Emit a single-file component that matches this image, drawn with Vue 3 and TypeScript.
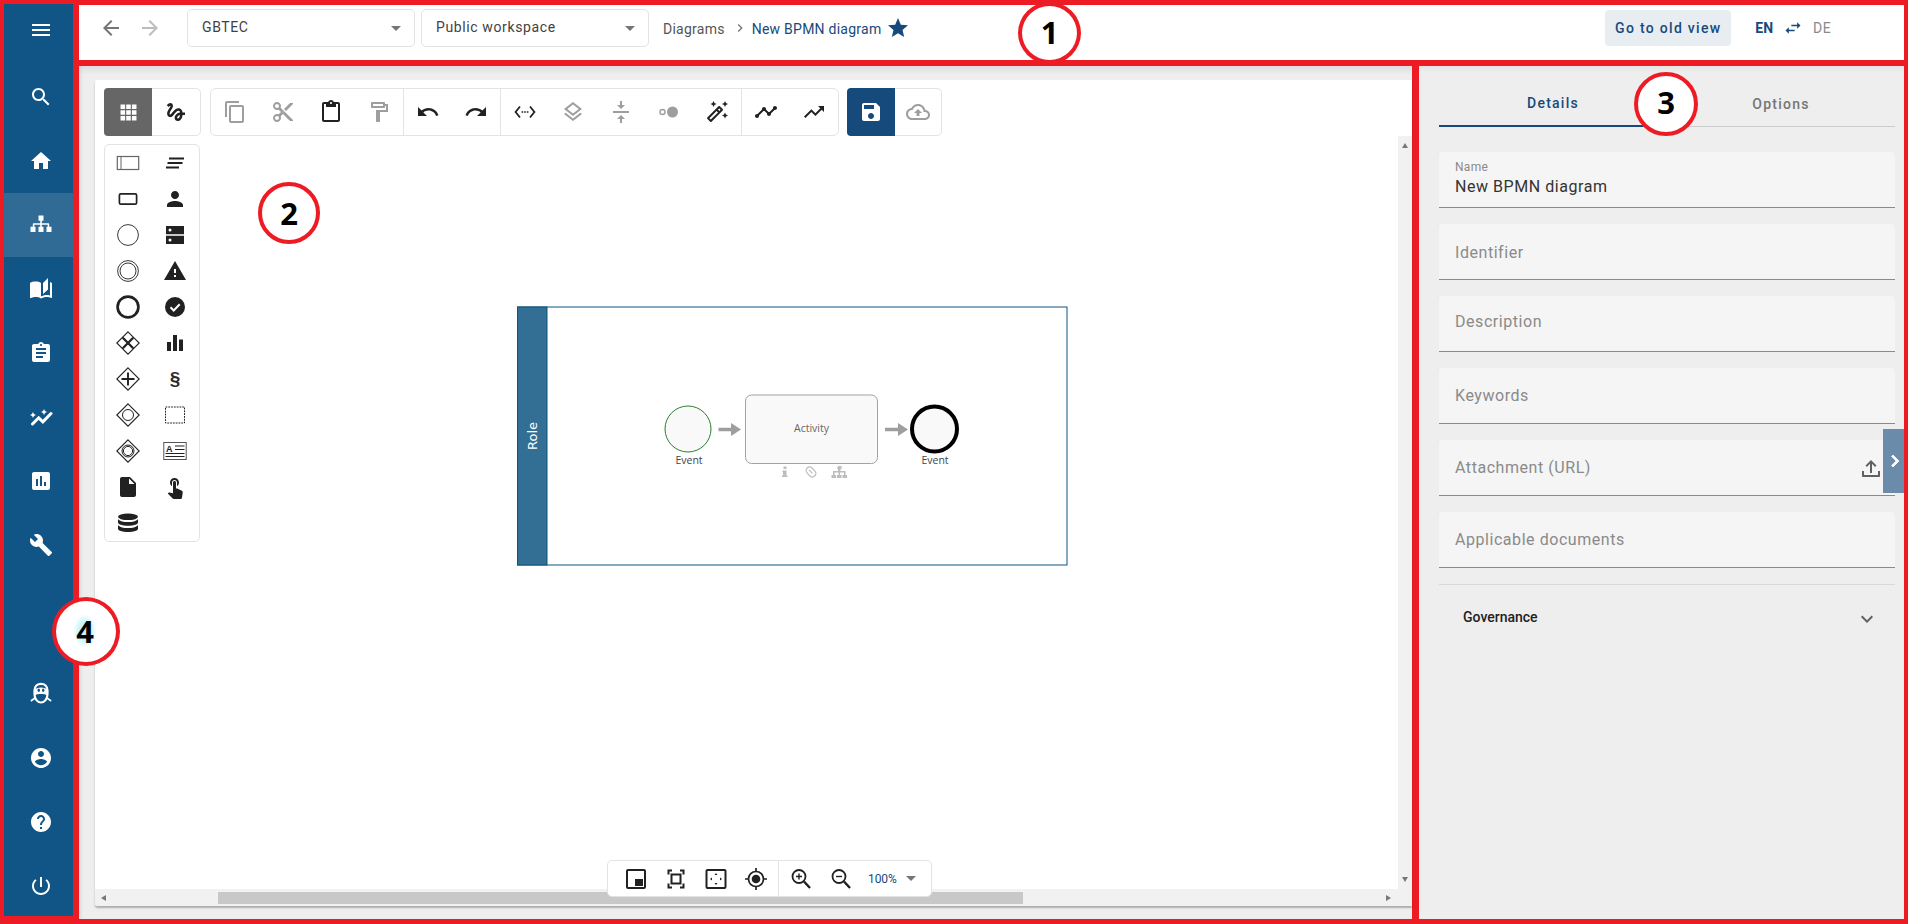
<script setup lang="ts">
const P: Record<string, string> = {
  menu: 'M3 18h18v-2H3v2zm0-5h18v-2H3v2zm0-7v2h18V6H3z',
  search: 'M15.5 14h-.79l-.28-.27C15.41 12.59 16 11.11 16 9.5 16 5.91 13.09 3 9.5 3S3 5.91 3 9.5 5.91 16 9.5 16c1.61 0 3.09-.59 4.23-1.57l.27.28v.79l5 4.99L20.49 19l-4.99-5zm-6 0C7.01 14 5 11.99 5 9.5S7.01 5 9.5 5 14 7.01 14 9.5 11.99 14 9.5 14z',
  home: 'M10 20v-6h4v6h5v-8h3L12 3 2 12h3v8z',
  sitemap: 'M9.5 2.5h5v5.2h-1.7v2.6h6.4c.6 0 1 .4 1 1v2.4h2.3v5.3h-5v-5.3h1.2v-1.9h-5.9v1.9h1.7v5.3h-5v-5.3h1.7v-1.9H5.3v1.9h1.2v5.3h-5v-5.3h2.3v-2.4c0-.6.4-1 1-1h6.4V7.7H9.5z',
  book: 'M19 1l-5 5v11l5-4.5V1zM1 6v14.65c0 .25.25.5.5.5.1 0 .15-.05.25-.05C3.1 20.45 5.05 20 6.5 20c1.95 0 4.05.4 5.5 1.5V6c-1.45-1.1-3.55-1.5-5.5-1.5S2.45 4.9 1 6zm22 13.5V6c-.6-.45-1.25-.75-2-1v13.5c-1.1-.35-2.3-.5-3.5-.5-1.7 0-4.15.65-5.5 1.5v2c1.35-.85 3.8-1.5 5.5-1.5 1.65 0 3.35.3 4.75 1.05.1.05.15.05.25.05.25 0 .5-.25.5-.5v-1.1z',
  assign: 'M19 3h-4.18C14.4 1.84 13.3 1 12 1c-1.3 0-2.4.84-2.82 2H5c-1.1 0-2 .9-2 2v14c0 1.1.9 2 2 2h14c1.1 0 2-.9 2-2V5c0-1.1-.9-2-2-2zm-7 0c.55 0 1 .45 1 1s-.45 1-1 1-1-.45-1-1 .45-1 1-1zm2 14H7v-2h7v2zm3-4H7v-2h10v2zm0-4H7V7h10v2z',
  assess: 'M19 3H5c-1.1 0-2 .9-2 2v14c0 1.1.9 2 2 2h14c1.1 0 2-.9 2-2V5c0-1.1-.9-2-2-2zM9 17H7v-7h2v7zm4 0h-2V7h2v10zm4 0h-2v-4h2v4z',
  build: 'M22.7 19l-9.1-9.1c.9-2.3.4-5-1.5-6.9-2-2-5-2.4-7.4-1.3L9 6 6 9 1.6 4.7C.4 7.1.9 10.1 2.9 12.1c1.9 1.9 4.6 2.4 6.9 1.5l9.1 9.1c.4.4 1 .4 1.4 0l2.3-2.3c.5-.4.5-1.1.1-1.4z',
  account: 'M12 2C6.48 2 2 6.48 2 12s4.48 10 10 10 10-4.48 10-10S17.52 2 12 2zm0 3c1.66 0 3 1.34 3 3s-1.34 3-3 3-3-1.34-3-3 1.34-3 3-3zm0 14.2c-2.5 0-4.71-1.28-6-3.22.03-1.99 4-3.08 6-3.08 1.99 0 5.97 1.09 6 3.08-1.29 1.94-3.5 3.22-6 3.22z',
  help: 'M12 2C6.48 2 2 6.48 2 12s4.48 10 10 10 10-4.48 10-10S17.52 2 12 2zm1 17h-2v-2h2v2zm2.07-7.75l-.9.92C13.45 12.9 13 13.5 13 15h-2v-.5c0-1.1.45-2.1 1.17-2.83l1.24-1.26c.37-.36.59-.86.59-1.41 0-1.1-.9-2-2-2s-2 .9-2 2H8c0-2.21 1.79-4 4-4s4 1.79 4 4c0 .88-.36 1.68-.93 2.25z',
  power: 'M13 3h-2v10h2V3zm4.83 2.17l-1.42 1.42C17.99 7.86 19 9.81 19 12c0 3.87-3.13 7-7 7s-7-3.13-7-7c0-2.19 1.01-4.14 2.58-5.42L6.17 5.17C4.23 6.82 3 9.26 3 12c0 4.97 4.03 9 9 9s9-4.03 9-9c0-2.74-1.23-5.18-3.17-6.83z',
  back: 'M20 11H7.83l5.59-5.59L12 4l-8 8 8 8 1.41-1.41L7.83 13H20v-2z',
  forward: 'M12 4l-1.41 1.41L16.17 11H4v2h12.17l-5.58 5.59L12 20l8-8z',
  star: 'M12 17.27L18.18 21l-1.64-7.03L22 9.24l-7.19-.61L12 2 9.19 8.63 2 9.24l5.46 4.73L5.82 21z',
  swap: 'M6.99 11L3 15l3.99 4v-3H14v-2H6.99v-3zM21 9l-3.99-4v3H10v2h7.01v3L21 9z',
  apps: 'M4.5 4.5h4.3v4.3H4.5zm5.35 0h4.3v4.3h-4.3zm5.35 0h4.3v4.3h-4.3zM4.5 9.85h4.3v4.3H4.5zm5.35 0h4.3v4.3h-4.3zm5.35 0h4.3v4.3h-4.3zM4.5 15.2h4.3v4.3H4.5zm5.35 0h4.3v4.3h-4.3zm5.35 0h4.3v4.3h-4.3z',
  gesture: 'M4.59 6.89c.7-.71 1.4-1.35 1.71-1.22.5.2 0 1.03-.3 1.52-.25.42-2.86 3.89-2.86 6.31 0 1.28.48 2.34 1.34 2.98.75.56 1.74.73 2.64.46 1.07-.31 1.95-1.4 3.06-2.77 1.21-1.49 2.83-3.44 4.08-3.44 1.63 0 1.65 1.01 1.76 1.79-3.78.64-5.38 3.67-5.38 5.37 0 1.7 1.44 3.09 3.21 3.09 1.63 0 4.29-1.33 4.69-6.1H21v-2.5h-2.47c-.15-1.65-1.09-4.2-4.03-4.2-2.25 0-4.18 1.91-4.94 2.84-.58.73-2.06 2.48-2.29 2.72-.25.3-.68.84-1.11.84-.45 0-.72-.83-.36-1.92.35-1.09 1.4-2.86 1.85-3.52.78-1.14 1.3-1.92 1.3-3.28C8.95 3.69 7.31 3 6.44 3 5.12 3 3.97 4 3.72 4.25c-.36.36-.66.66-.88.93l1.75 1.71zm9.29 11.66c-.31 0-.74-.26-.74-.72 0-.6.73-2.2 2.87-2.76-.3 2.69-1.43 3.48-2.13 3.48z',
  copy: 'M16 1H4c-1.1 0-2 .9-2 2v14h2V3h12V1zm3 4H8c-1.1 0-2 .9-2 2v14c0 1.1.9 2 2 2h11c1.1 0 2-.9 2-2V7c0-1.1-.9-2-2-2zm0 16H8V7h11v14z',
  cut: 'M9.64 7.64c.23-.5.36-1.05.36-1.64 0-2.21-1.79-4-4-4S2 3.79 2 6s1.79 4 4 4c.59 0 1.14-.13 1.64-.36L10 12l-2.36 2.36C7.14 14.13 6.59 14 6 14c-2.21 0-4 1.79-4 4s1.79 4 4 4 4-1.79 4-4c0-.59-.13-1.14-.36-1.64L12 14l7 7h3v-1L9.64 7.64zM6 8c-1.1 0-2-.89-2-2s.9-2 2-2 2 .89 2 2-.9 2-2 2zm0 12c-1.1 0-2-.89-2-2s.9-2 2-2 2 .89 2 2-.9 2-2 2zm6-7.5c-.28 0-.5-.22-.5-.5s.22-.5.5-.5.5.22.5.5-.22.5-.5.5zM19 3l-6 6 2 2 7-7V3z',
  paste: 'M19 2h-4.18C14.4.84 13.3 0 12 0c-1.3 0-2.4.84-2.82 2H5c-1.1 0-2 .9-2 2v16c0 1.1.9 2 2 2h14c1.1 0 2-.9 2-2V4c0-1.1-.9-2-2-2zm-7 0c.55 0 1 .45 1 1s-.45 1-1 1-1-.45-1-1 .45-1 1-1zm7 18H5V4h2v3h10V4h2v16z',
  paint: 'M18 4V3c0-.55-.45-1-1-1H5c-.55 0-1 .45-1 1v4c0 .55.45 1 1 1h12c.55 0 1-.45 1-1V6h1v4H9v11c0 .55.45 1 1 1h2c.55 0 1-.45 1-1v-9h8V4h-3zm-2 2H6V4h10v2z',
  undo: 'M12.5 8c-2.65 0-5.05.99-6.9 2.6L2 7v9h9l-3.62-3.62c1.39-1.16 3.16-1.88 5.12-1.88 3.54 0 6.55 2.31 7.6 5.5l2.37-.78C21.08 11.03 17.15 8 12.5 8z',
  redo: 'M18.4 10.6C16.55 8.99 14.15 8 11.5 8c-4.65 0-8.58 3.03-9.96 7.22L3.9 16c1.05-3.19 4.05-5.5 7.6-5.5 1.95 0 3.73.72 5.12 1.88L13 16h9V7l-3.6 3.6z',
  layers: 'M11.99 18.54l-7.37-5.73L3 14.07l9 7 9-7-1.63-1.27-7.38 5.74zM12 16l7.36-5.73L21 9l-9-7-9 7 1.63 1.27L12 16zm0-11.47L17.74 9 12 13.47 6.26 9 12 4.53z',
  valign: 'M8 19h3v4h2v-4h3l-4-4-4 4zm8-14h-3V1h-2v4H8l4 4 4-4zM4 11v2h16v-2H4z',
  wand: 'M20 7l.94-2.06L23 4l-2.06-.94L20 1l-.94 2.06L17 4l2.06.94zM8.5 7l.94-2.06L11.5 4l-2.06-.94L8.5 1l-.94 2.06L5.5 4l2.06.94zM20 12.5l-.94 2.06-2.06.94 2.06.94.94 2.06.94-2.06L23 15.5l-2.06-.94zm-2.29-3.38l-2.83-2.83c-.2-.19-.45-.29-.71-.29-.26 0-.51.1-.71.29L2.29 17.46c-.39.39-.39 1.02 0 1.41l2.83 2.83c.2.2.45.3.71.3s.51-.1.71-.29l11.17-11.17c.39-.39.39-1.03 0-1.42zm-3.54-.7l1.41 1.41L14.41 11 13 9.59l1.17-1.17zM5.83 19.59l-1.41-1.41L11.59 11 13 12.41l-7.17 7.18z',
  timeline: 'M23 8c0 1.1-.9 2-2 2-.18 0-.35-.02-.51-.07l-3.56 3.55c.05.16.07.34.07.52 0 1.1-.9 2-2 2s-2-.9-2-2c0-.18.02-.36.07-.52l-2.55-2.55c-.16.05-.34.07-.52.07s-.36-.02-.52-.07l-4.55 4.56c.05.16.07.33.07.51 0 1.1-.9 2-2 2s-2-.9-2-2 .9-2 2-2c.18 0 .35.02.51.07l4.56-4.55C8.02 9.36 8 9.18 8 9c0-1.1.9-2 2-2s2 .9 2 2c0 .18-.02.36-.07.52l2.55 2.55c.16-.05.34-.07.52-.07s.36.02.52.07l3.55-3.56C19.02 8.35 19 8.18 19 8c0-1.1.9-2 2-2s2 .9 2 2z',
  trend: 'M16 6l2.29 2.29-4.88 4.88-4-4L2 16.59 3.41 18l6-6 4 4 6.3-6.29L22 12V6z',
  save: 'M17 3H5c-1.11 0-2 .9-2 2v14c0 1.1.89 2 2 2h14c1.1 0 2-.9 2-2V7l-4-4zm-5 16c-1.66 0-3-1.34-3-3s1.34-3 3-3 3 1.34 3 3-1.34 3-3 3zm3-10H5V5h10v4z',
  cloud: 'M19.35 10.04C18.67 6.59 15.64 4 12 4 9.11 4 6.6 5.64 5.35 8.04 2.34 8.36 0 10.91 0 14c0 3.31 2.69 6 6 6h13c2.76 0 5-2.24 5-5 0-2.64-2.05-4.78-4.65-4.96zM19 18H6c-2.21 0-4-1.79-4-4 0-2.05 1.53-3.76 3.56-3.97l1.07-.11.5-.95C8.08 7.14 9.94 6 12 6c2.62 0 4.88 1.86 5.39 4.43l.3 1.5 1.53.11c1.56.1 2.78 1.41 2.78 2.96 0 1.65-1.35 3-3 3zM8 13h2.55v3h2.9v-3H16l-4-4z',
  person: 'M12 12c2.21 0 4-1.79 4-4s-1.79-4-4-4-4 1.79-4 4 1.79 4 4 4zm0 2c-2.67 0-8 1.34-8 4v2h16v-2c0-2.66-5.33-4-8-4z',
  warning: 'M1 21h22L12 2 1 21zm12-3h-2v-2h2v2zm0-4h-2v-4h2v4z',
  bars: 'M4 11h4v9H4zM10 4h4v16h-4zM16 8.5h4V20h-4z',
  file: 'M6 2c-1.1 0-1.99.9-1.99 2L4 20c0 1.1.89 2 1.99 2H18c1.1 0 2-.9 2-2V8l-6-6H6zm7 7V3.5L18.5 9H13z',
  touch: 'M9 11.24V7.5C9 6.12 10.12 5 11.5 5S14 6.12 14 7.5v3.74c1.21-.81 2-2.18 2-3.74C16 5.01 13.99 3 11.5 3S7 5.01 7 7.5c0 1.56.79 2.93 2 3.74zm9.84 4.63l-4.54-2.26c-.17-.07-.35-.11-.54-.11H13v-6c0-.83-.67-1.5-1.5-1.5S10 6.67 10 7.5v10.74l-3.43-.72c-.08-.01-.15-.03-.24-.03-.31 0-.59.13-.79.33l-.79.8 4.94 4.94c.27.27.65.44 1.06.44h6.79c.75 0 1.33-.55 1.44-1.28l.75-5.27c.01-.07.02-.14.02-.2 0-.62-.38-1.16-.91-1.38z',
  chevR: 'M10 6L8.59 7.41 13.17 12l-4.58 4.59L10 18l6-6z',
  chevD: 'M7.41 8.59L12 13.17l4.59-4.58L18 10l-6 6-6-6z'
}

function svgOf(d: string): string {
  return `<path fill="currentColor" d="${d}"/>`
}
const ring = 'fill="none" stroke="currentColor"'
const diamond = `<path d="M12 .8L23.2 12 12 23.2.8 12z" ${ring} stroke-width="1.1"/>`
const I: Record<string, string> = {
  graph: `<path fill="currentColor" d="M14.060 7.940L12 7l2.060-.94L15 4l.94 2.060L18 7l-2.060.94L15 10zM4 13l.94-2.060L7 10l-2.060-.94L4 7l-.94 2.060L1 10l2.060.94z"/><path d="M3.500 19l6.200-6.200 4.200 4L22 8.500" ${ring} stroke-width="3" stroke-linecap="round"/>`,
  code: `<path d="M7 6.500L2.600 12 7 17.500M17 6.500L21.400 12 17 17.500" ${ring} stroke-width="1.800"/><path fill="currentColor" d="M8.600 11.200h1.600v1.600H8.600zm2.600 0h1.600v1.600h-1.600zm2.600 0h1.600v1.600h-1.600z"/>`,
  robot: `<path d="M5.500 8.500C5.500 4 8.500 1.800 12 1.800s6.500 2.200 6.500 6.700v3.500c0 5-3 8.500-6.500 8.500s-6.500-3.500-6.500-8.500z" ${ring} stroke-width="2.200"/><path d="M5.500 13c3.500-1.500 9.500-1.500 13 0V8c-1.500-3.500-11.500-3.500-13 0z" fill="currentColor"/><ellipse cx="9.800" cy="8.300" rx="1.200" ry="1.700" fill="#105585"/><ellipse cx="14.200" cy="8.300" rx="1.200" ry="1.700" fill="#105585"/><path d="M6 16l-4.200 3M18 16l4.200 3" ${ring} stroke-width="1.600"/>`,
  pool: `<rect x="1.300" y="5.500" width="21.400" height="13" ${ring} stroke-width="1.200" style="color:#666"/><path d="M5 5.500v13" ${ring} stroke-width="1" style="color:#666"/>`,
  notes: `<path d="M6 7.500h15M4.500 12h15M3 16.500h13" ${ring} stroke-width="1.800"/>`,
  task: `<rect x="3.400" y="6.800" width="17.200" height="10.400" rx="1.500" ${ring} stroke-width="1.700"/>`,
  start: `<circle cx="12" cy="12" r="10.400" ${ring} stroke-width=".9"/>`,
  inter: `<circle cx="12" cy="12" r="10.400" ${ring} stroke-width=".9"/><circle cx="12" cy="12" r="8" ${ring} stroke-width=".9"/>`,
  end: `<circle cx="12" cy="12" r="10.400" ${ring} stroke-width="2.700"/>`,
  store: `<path fill="currentColor" fill-rule="evenodd" d="M3 3h18v8.300H3zM3 12.700h18V21H3zM5.500 7.100a1.500 1.500 0 1 0 3 0 1.500 1.500 0 0 0-3 0zM5.500 16.900a1.500 1.500 0 1 0 3 0 1.500 1.500 0 0 0-3 0z"/>`,
  check: `<circle cx="12" cy="12" r="10" fill="currentColor"/><path d="M7.500 12.300l3.200 3.200 6-6.300" fill="none" stroke="#fff" stroke-width="2"/>`,
  gwX: `${diamond}<path d="M6.800 6.800l10.400 10.400M17.200 6.800L6.800 17.200" ${ring} stroke-width="2.300"/>`,
  gwP: `${diamond}<path d="M12 5.500v13M5.500 12h13" ${ring} stroke-width="1.900"/>`,
  gwO: `${diamond}<circle cx="12" cy="12" r="5.500" ${ring} stroke-width="1"/>`,
  gwD: `${diamond}<circle cx="12" cy="12" r="6" ${ring} stroke-width="1"/><circle cx="12" cy="12" r="4.600" ${ring} stroke-width="1"/>`,
  dash: `<rect x="2.500" y="4" width="19" height="16" ${ring} stroke-width="1" stroke-dasharray="1.800 1"/>`,
  doc: `<rect x=".8" y="3.500" width="22.400" height="17" ${ring} stroke-width="1" style="color:#555"/><path d="M2.500 14.500h19M2.500 17.500h19M12 7h9.500M12 10.500h9.500" ${ring} stroke-width="1.100"/><text x="3" y="12.500" font-family="Liberation Sans, sans-serif" font-weight="700" font-size="9" fill="currentColor">A</text>`,
  db: `<ellipse cx="12" cy="5.800" rx="10" ry="3.300" fill="currentColor"/><path fill="currentColor" d="M2 8.200c2 2 5.500 2.900 10 2.900s8-.9 10-2.900v3.200c0 1.900-4.500 3.300-10 3.300s-10-1.400-10-3.300zM2 14.200c2 2 5.500 2.900 10 2.900s8-.9 10-2.900v3.600c0 1.900-4.500 3.300-10 3.300s-10-1.400-10-3.300z"/>`,
  pip: `<rect x="3" y="3" width="18" height="18" rx="1" ${ring} stroke-width="2"/><rect x="11" y="12" width="8" height="7" fill="currentColor"/>`,
  focus: `<path d="M8 3.500H4.500v4M16 3.500h3.500v4M8 20.500H4.500v-4M16 20.500h3.500v-4" ${ring} stroke-width="2"/><rect x="7.500" y="7.500" width="9" height="9" ${ring} stroke-width="2"/>`,
  fit: `<rect x="2.500" y="3" width="19" height="18" rx="1" ${ring} stroke-width="2"/><path fill="currentColor" d="M12 6l1.500 2h-3zM12 18l-1.500-2h3zM6 12l2-1.500v3zM18 12l-2 1.500v-3z"/>`,
  target: `<circle cx="12" cy="12" r="7.500" ${ring} stroke-width="1.700"/><circle cx="12" cy="12" r="4.300" fill="currentColor"/><path d="M12 1v3.500M12 19.500V23M1 12h3.500M19.500 12H23" ${ring} stroke-width="1.700"/>`,
  zoomIn: `<circle cx="10" cy="9.500" r="6.500" ${ring} stroke-width="1.800"/><path d="M15 14.500l6 6.500" ${ring} stroke-width="2.400"/><path d="M10 6.500v6M7 9.500h6" ${ring} stroke-width="1.400"/>`,
  zoomOut: `<circle cx="10" cy="9.500" r="6.500" ${ring} stroke-width="1.800"/><path d="M15 14.500l6 6.500" ${ring} stroke-width="2.400"/><path d="M7 9.500h6" ${ring} stroke-width="1.400"/>`,
  dots: `<circle cx="5.500" cy="12" r="2.500" fill="none" stroke="currentColor" stroke-width="1.400"/><circle cx="15.500" cy="12" r="5.500" fill="currentColor"/>`
}
for (const k of Object.keys(P)) I[k] = svgOf(P[k])

const navTop = ['search', 'home', 'sitemap', 'book', 'assign', 'graph', 'assess', 'build']
const navBottom = ['robot', 'account', 'help', 'power']

interface Tool { i: string; off?: boolean }
const toolGroups: Tool[][] = [
  [{ i: 'copy', off: true }, { i: 'cut', off: true }, { i: 'paste' }, { i: 'paint', off: true }],
  [{ i: 'undo' }, { i: 'redo' }],
  [{ i: 'code' }, { i: 'layers', off: true }, { i: 'valign', off: true }, { i: 'dots', off: true }, { i: 'wand' }],
  [{ i: 'timeline' }, { i: 'trend' }]
]
const palette = ['pool', 'notes', 'task', 'person', 'start', 'store', 'inter', 'warning', 'end', 'check', 'gwX', 'bars', 'gwP', '§', 'gwO', 'dash', 'gwD', 'doc', 'file', 'touch', 'db']
const fields = ['Identifier', 'Description', 'Keywords', 'Attachment (URL)', 'Applicable documents']
</script>

<template>
  <div class="page">
    <aside class="nav">
      <div class="nav-item nav-burger"><svg class="i24" viewBox="0 0 24 24" v-html="I.menu" /></div>
      <div v-for="n in navTop" :key="n" class="nav-item" :class="{ active: n === 'sitemap' }">
        <svg class="i24" viewBox="0 0 24 24" v-html="I[n]" />
      </div>
      <div class="nav-spacer" />
      <div v-for="n in navBottom" :key="n" class="nav-item">
        <svg class="i24" viewBox="0 0 24 24" v-html="I[n]" />
      </div>
    </aside>

    <div class="right">
      <header class="top">
        <svg class="i24 arrow" viewBox="0 0 24 24" v-html="I.back" />
        <svg class="i24 arrow off" viewBox="0 0 24 24" v-html="I.forward" />
        <div class="select first"><span>GBTEC</span><i class="caret" /></div>
        <div class="select"><span>Public workspace</span><i class="caret" /></div>
        <nav class="crumbs">
          <span class="crumb">Diagrams</span>
          <svg class="crumb-sep" viewBox="0 0 24 24" v-html="I.chevR" />
          <span class="crumb current">New BPMN diagram</span>
          <svg class="star" viewBox="0 0 24 24" v-html="I.star" />
        </nav>
        <div class="top-right">
          <button class="old">Go to old view</button>
          <div class="lang">
            <b>EN</b>
            <svg class="swap" viewBox="0 0 24 24" v-html="I.swap" />
            <span>DE</span>
          </div>
        </div>
      </header>

      <div class="body">
        <main class="main">
          <section class="card">
            <svg class="diagram" viewBox="95 80 1317 826" width="1317" height="826">
              <rect x="517.500" y="307" width="549.500" height="258" fill="#fff" stroke="#0f5480" stroke-width="1" />
              <rect x="517.500" y="307" width="29.500" height="258" fill="#336f94" stroke="#0f5480" stroke-width="1" />
              <text transform="translate(537 436) rotate(-90)" text-anchor="middle" class="role">Role</text>

              <circle cx="688" cy="429" r="23" fill="#f9f9f9" stroke="#2d7d2d" stroke-width="1" />
              <text x="689" y="464" text-anchor="middle" class="lbl">Event</text>

              <path d="M718.500 429.500h15" stroke="#9e9e9e" stroke-width="3.500" />
              <path d="M731 423l10 6.500-10 6.500z" fill="#9e9e9e" />

              <rect x="745.500" y="395" width="132" height="68.500" rx="6" fill="#f9f9f9" stroke="#a3a3a3" />
              <text x="811.500" y="432" text-anchor="middle" class="lbl dim">Activity</text>

              <path d="M885 429.500h15" stroke="#9e9e9e" stroke-width="3.500" />
              <path d="M898 423l10 6.500-10 6.500z" fill="#9e9e9e" />

              <circle cx="934.500" cy="429" r="22.500" fill="#f9f9f9" stroke="#000" stroke-width="4" />
              <text x="935" y="464" text-anchor="middle" class="lbl">Event</text>

              <g fill="#bdbdbd">
                <path d="M783.500 466.500h3v2.500h-3zM783 470.500h3.500v5h1v1.500h-5.500v-1.500h1v-3.500h-1z" />
                <g transform="rotate(-42 811 472)">
                  <rect x="807.500" y="466.500" width="7" height="11" rx="3.500" fill="none" stroke="#bdbdbd" stroke-width="1.300" />
                  <path d="M811 469v5" stroke="#bdbdbd" stroke-width="1.100" fill="none" />
                </g>
                <path d="M838 466h3.500v3h-1v2h5v4h1.500v3h-4.500v-3h1.500v-2.500h-4v2.500h1.500v3H837v-3h1.500v-2.500h-4v2.500H836v3h-4.500v-3h1.500v-4h5v-2h-1z" />
              </g>
            </svg>

            <div class="tools">
              <div class="bar">
                <div class="group">
                  <div class="tool on"><svg class="apps" viewBox="4 4 16 16" v-html="I.apps" /></div>
                  <div class="tool"><svg class="i24" viewBox="0 0 24 24" v-html="I.gesture" /></div>
                </div>
                <div class="group g-main">
                  <div v-for="(g, gi) in toolGroups" :key="gi" class="sub">
                    <div v-for="t in g" :key="t.i" class="tool" :class="{ off: t.off }">
                      <svg class="i24" viewBox="0 0 24 24" v-html="I[t.i]" />
                    </div>
                  </div>
                </div>
                <div class="group g-save">
                  <div class="tool save"><svg class="i24" viewBox="0 0 24 24" v-html="I.save" /></div>
                  <div class="tool off cloud"><svg class="i24" viewBox="0 0 24 24" v-html="I.cloud" /></div>
                </div>
              </div>

              <div class="palette">
                <div v-for="p in palette" :key="p" class="pal">
                  <span v-if="p === '§'" class="para">§</span>
                  <svg v-else class="i24" viewBox="0 0 24 24" v-html="I[p]" />
                </div>
              </div>
            </div>

            <div class="vscroll"><i class="tri t-up" /><i class="tri t-down" /></div>
            <div class="hscroll">
              <i class="tri t-left" />
              <div class="thumb" />
              <i class="tri t-right" />
            </div>

            <div class="zoombar">
              <div class="zb-set">
                <svg class="i24 zb" viewBox="0 0 24 24" v-html="I.pip" />
                <svg class="i24 zb" viewBox="0 0 24 24" v-html="I.focus" />
                <svg class="i24 zb" viewBox="0 0 24 24" v-html="I.fit" />
                <svg class="i24 zb" viewBox="0 0 24 24" v-html="I.target" />
              </div>
              <div class="zb-set second">
                <svg class="i24 zb" viewBox="0 0 24 24" v-html="I.zoomIn" />
                <svg class="i24 zb" viewBox="0 0 24 24" v-html="I.zoomOut" />
                <span class="pct">100%</span>
                <i class="caret" />
              </div>
            </div>
          </section>
        </main>

        <aside class="panel">
          <div class="tabs">
            <div class="tab active">Details</div>
            <div class="tab">Options</div>
          </div>
          <div class="field">
            <small>Name</small>
            <span class="value">New BPMN diagram</span>
          </div>
          <div v-for="f in fields" :key="f" class="field empty" :class="{ desc: f === 'Description', idn: f === 'Identifier' }">
            <span class="ph">{{ f }}</span>
            <svg v-if="f.startsWith('Attachment')" class="upl" viewBox="0 0 24 24">
              <path fill="currentColor" d="M12 4l-5.500 5.500 1.400 1.400 3.100-3.100V17h2V7.800l3.100 3.100 1.400-1.400zM3 15h2v4h14v-4h2v5c0 .6-.4 1-1 1H4c-.6 0-1-.4-1-1z" />
            </svg>
          </div>
          <div class="gov">
            <span>Governance</span>
            <svg class="gov-chev" viewBox="0 0 24 24" v-html="I.chevD" />
          </div>
          <div class="collapse"><svg viewBox="0 0 24 24" v-html="I.chevR" /></div>
        </aside>
      </div>
    </div>

    <div class="mark m1">1</div>
    <div class="mark m2">2</div>
    <div class="mark m3">3</div>
    <div class="mark m4"><span>4</span></div>
  </div>
</template>

<style>
html, body { margin: 0; background: #ed1c24; }
</style>

<style scoped>
.page {
  position: relative;
  display: flex;
  width: 1908px;
  height: 924px;
  overflow: hidden;
  background: #ed1c24;
  font-family: Roboto, "Liberation Sans", sans-serif;
  color: #333;
}
.i24 { width: 24px; height: 24px; display: block; }

/* side navigation */
.nav {
  width: 69px;
  margin: 4px 6px 8px 4px;
  flex: none;
  display: flex;
  flex-direction: column;
  background: #105585;
  color: #fff;
}
.nav-item { height: 64px; flex: none; box-sizing: border-box; padding-left: 5px; display: flex; align-items: center; justify-content: center; }
.nav-burger { height: 52px; margin-bottom: 9px; }
.nav-item.active { background: #2f6b94; }
.nav-spacer { flex: 1; }
.nav-item:last-child { margin-bottom: -2px; }

/* right side */
.right { flex: 1; min-width: 0; margin: 5px 4px 5px 0; display: flex; flex-direction: column; gap: 6px; }
.top {
  height: 55px;
  flex: none;
  box-sizing: border-box;
  padding: 4px 73px 0 20px;
  display: flex;
  align-items: flex-start;
  background: #fff;
}
.arrow { margin-top: 7px; color: #757575; margin-right: 15px; }
.arrow.off { color: #bdbdbd; margin-right: 0; }
.select {
  width: 228px;
  height: 38px;
  box-sizing: border-box;
  margin-left: 6px;
  padding: 0 13px 0 14px;
  display: flex;
  align-items: center;
  justify-content: space-between;
  border: 1px solid #e3e3e3;
  border-radius: 5px;
  font-size: 14px;
  letter-spacing: .62px;
  color: #424242;
}
.select.first { margin-left: 25px; }
.select span { margin-top: -3px; }
.caret { width: 0; height: 0; border-left: 5px solid transparent; border-right: 5px solid transparent; border-top: 5px solid #757575; flex: none; }
.crumbs { display: flex; align-items: center; height: 40px; margin-left: 14px; }
.crumb { font-size: 14px; letter-spacing: .25px; color: #555; }
.crumb.current { color: #174a7c; }
.crumb-sep { width: 16px; height: 16px; margin: -2px 4px 0 7px; color: #777; }
.star { width: 24px; height: 24px; margin: -2px 0 0 5px; color: #174a7c; }
.top-right { margin-left: auto; display: flex; align-items: center; margin-top: 1px; }
.old {
  width: 126px;
  height: 36px;
  padding: 0;
  border: 0;
  border-radius: 4px;
  background: #e8edf2;
  color: #174a7c;
  font: 500 14px Roboto, sans-serif;
  letter-spacing: 1.3px;
}
.lang { display: flex; align-items: center; margin-left: 24px; font-size: 14px; color: #8a8a8a; letter-spacing: .4px; }
.lang b { color: #174a7c; font-weight: 700; letter-spacing: 0; }
.swap { width: 20px; height: 20px; margin: 0 10px; color: #174a7c; }

.body { flex: 1; min-height: 0; display: flex; gap: 7px; }

/* canvas */
.main {
  width: 1333px;
  flex: none;
  box-sizing: border-box;
  padding: 14px 0 13px 16px;
  display: flex;
  background: linear-gradient(#dedede 0, #eeeeee 9px);
  box-shadow: inset 4px 0 4px -3px rgba(0,0,0,.12);
}
.card {
  position: relative;
  flex: 1;
  background: #fff;
  border-radius: 3px 0 0 3px;
  box-shadow: 0 2px 2px rgba(0,0,0,.28);
}
.diagram { position: absolute; left: 0; top: 0; display: block; }
.role { font: 13px "DejaVu Sans", sans-serif; fill: #fff; }
.lbl { font: 10.5px "Open Sans", sans-serif; fill: #444; }
.lbl.dim { fill: #666; }

.tools { position: relative; padding: 8px 9px; display: flex; flex-direction: column; gap: 8px; align-items: flex-start; }
.bar { display: flex; gap: 9px; }
.group {
  display: flex;
  height: 48px;
  box-sizing: border-box;
  border: 1px solid #e3e3e3;
  border-radius: 5px;
  background: #fff;
}
.g-main { border-radius: 6px; }
.g-save { margin-left: -1px; }
.sub { display: flex; border-left: 1px solid #e3e3e3; }
.sub:first-child { border-left: 0; }
.tool { width: 48px; height: 46px; display: flex; align-items: center; justify-content: center; color: #212121; }
.tool.off { color: #9e9e9e; }
.tool.on { margin: -1px 0 -1px -1px; height: 48px; background: #666; color: #fff; border-radius: 4px 0 0 4px; }
.tool.save { margin: -1px 0 -1px -1px; height: 48px; background: #174a7c; color: #fff; border-radius: 4px 0 0 4px; }
.tool.cloud { width: 46px; }
.apps { width: 17px; height: 17px; display: block; }
.palette {
  width: 96px;
  box-sizing: border-box;
  display: grid;
  grid-template-columns: 46px 48px;
  grid-auto-rows: 36px;
  border: 1px solid #e3e3e3;
  border-radius: 5px;
  background: #fff;
  color: #212121;
}
.pal { display: flex; align-items: center; justify-content: center; }
.para { font: 700 19px "Liberation Sans", sans-serif; color: #2b2b2b; }

/* scrollbars */
.vscroll {
  position: absolute;
  right: 0;
  top: 56px;
  bottom: 17px;
  width: 14px;
  box-sizing: border-box;
  padding: 7px 0 7px;
  background: #f1f1f1;
  display: flex;
  flex-direction: column;
  align-items: center;
  justify-content: space-between;
}
.hscroll {
  position: absolute;
  left: 0;
  right: 0;
  bottom: 0;
  height: 17px;
  box-sizing: border-box;
  padding: 0 21px 0 6px;
  background: #f1f1f1;
  display: flex;
  align-items: center;
  border-radius: 0 0 0 3px;
}
.thumb { width: 805px; height: 12px; margin-left: 112px; background: #c8c8c8; }
.tri { width: 0; height: 0; flex: none; border: 3px solid transparent; }
.t-up { border-top: 0; border-bottom: 5px solid #777; }
.t-down { border-bottom: 0; border-top: 5px solid #777; }
.t-left { border-left: 0; border-right: 5px solid #777; }
.t-right { border-right: 0; border-left: 5px solid #777; margin-left: auto; }

/* zoom toolbar */
.zoombar {
  position: absolute;
  left: 512px;
  top: 780px;
  width: 325px;
  height: 37px;
  box-sizing: border-box;
  display: flex;
  background: #fff;
  border: 1px solid #e3e3e3;
  border-radius: 5px;
  color: #212121;
}
.zb-set { display: flex; align-items: center; padding-left: 8px; width: 170px; box-sizing: border-box; }
.zb-set.second { border-left: 1px solid #e3e3e3; padding-left: 2px; flex: 1; }
.zb { margin: 0 8px; }
.pct { font-size: 12px; letter-spacing: -.1px; color: #174a7c; margin-left: 7px; }
.zoombar .caret { margin-left: 9px; }

/* details panel */
.panel {
  position: relative;
  flex: 1;
  box-sizing: border-box;
  padding: 20px 9px 0 20px;
  background: linear-gradient(#e4e4e4 0, #eeeeee 6px);
}
.tabs { display: flex; height: 41px; border-bottom: 1px solid #ccc; box-sizing: border-box; margin-bottom: 25px; }
.tab {
  flex: 1;
  height: 41px;
  box-sizing: border-box;
  padding-bottom: 6px;
  display: flex;
  align-items: center;
  justify-content: center;
  font-size: 14px;
  font-weight: 500;
  letter-spacing: 1.25px;
  color: #757575;
}
.tab.active { color: #174a7c; border-bottom: 2px solid #174a7c; }
.field {
  position: relative;
  height: 56px;
  box-sizing: border-box;
  margin-bottom: 16px;
  padding: 8px 16px 0;
  display: flex;
  flex-direction: column;
  background: #f5f5f5;
  border-bottom: 1px solid #8a8a8a;
  border-radius: 4px 4px 0 0;
}
.field small { font-size: 12px; letter-spacing: .3px; line-height: 14px; color: #8a8a8a; }
.value { font-size: 16px; letter-spacing: .55px; line-height: 20px; margin-top: 3px; color: #333; }
.field.empty { flex-direction: row; align-items: center; padding-top: 0; }
.field.idn { padding-top: 2px; }
.field.desc { padding-bottom: 4px; }
.ph { font-size: 16px; letter-spacing: .55px; color: #8a8a8a; }
.upl { position: absolute; right: 12px; top: 16px; width: 24px; height: 24px; color: #616161; }
.gov {
  border-top: 1px solid #d8d8d8;
  height: 64px;
  box-sizing: border-box;
  padding: 0 16px 0 24px;
  display: flex;
  align-items: center;
  justify-content: space-between;
  font-size: 14px;
  font-weight: 500;
  color: #222;
}
.gov-chev { width: 24px; height: 24px; margin-top: 5px; color: #616161; }
.collapse {
  position: absolute;
  right: 0;
  top: 363px;
  width: 21px;
  height: 64px;
  display: flex;
  align-items: center;
  justify-content: center;
  background: #6b8bab;
  color: #fff;
}
.collapse svg { width: 24px; height: 24px; flex: none; margin: -1px 0 0 3px; stroke: currentColor; stroke-width: .8px; }

/* numbered callouts */
.mark {
  position: absolute;
  box-sizing: border-box;
  border: 4.5px solid #ed1c24;
  border-radius: 50%;
  background: #fff;
  display: flex;
  align-items: center;
  justify-content: center;
  font: 700 31px "Open Sans", sans-serif;
  color: #000;
}
.m1 { left: 1018px; top: 2px; width: 63px; height: 62px; padding-bottom: 3px; }
.m2 { left: 258px; top: 182px; width: 62px; height: 62px; }
.m3 { left: 1634px; top: 72px; width: 64px; height: 64px; padding-bottom: 4px; }
.m4 { left: 52px; top: 597px; width: 68px; height: 69px; padding-right: 2px; padding-bottom: 2px; }
.m4 span { background: radial-gradient(#c8f4fb 40%, #fff 75%); line-height: 32px; padding: 0 2px; }
</style>
